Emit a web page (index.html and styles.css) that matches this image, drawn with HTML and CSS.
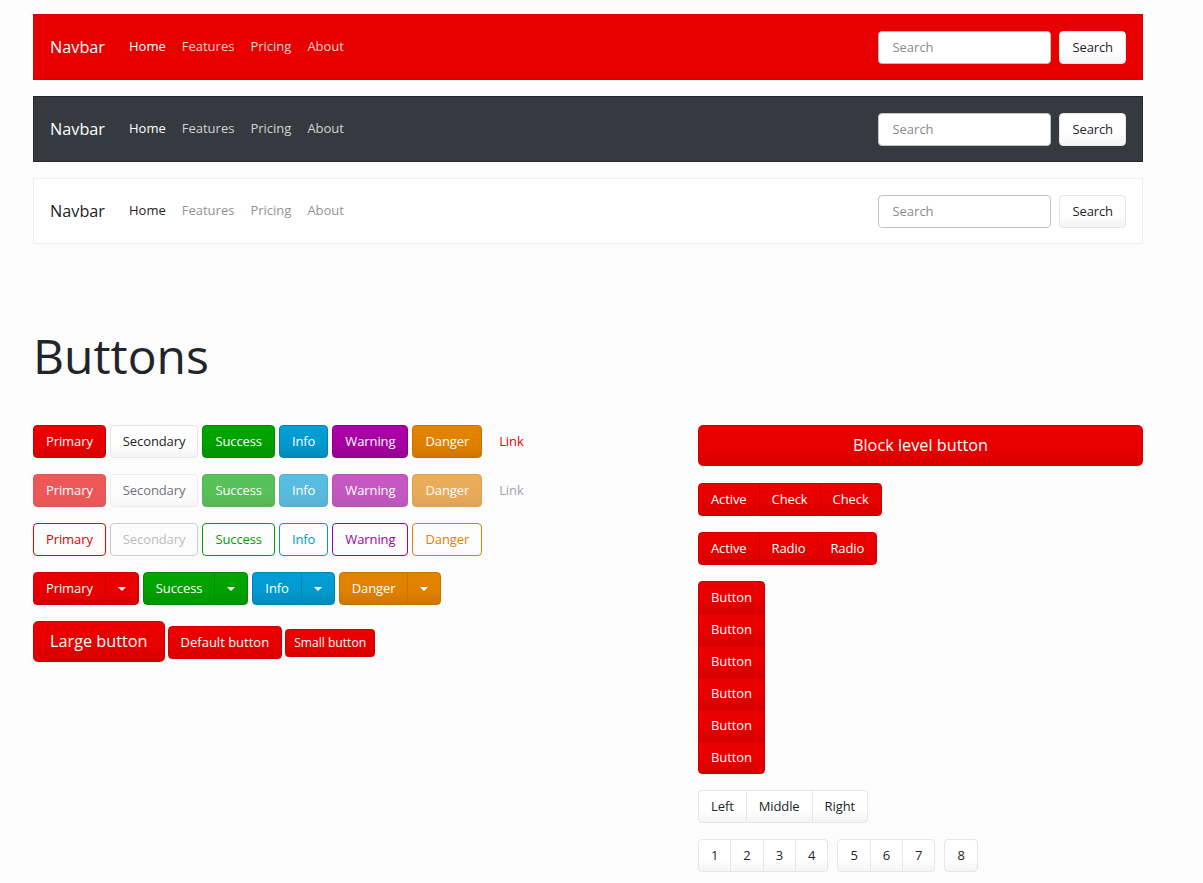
FILE: index.html
```html
<!DOCTYPE html>
<html lang="en">
<head>
<meta charset="utf-8">
<title>Buttons</title>
<link rel="stylesheet" href="styles.css">
</head>
<body>
<div class="container">
  <div class="navs">
    <nav class="navbar navbar-red">
      <span class="brand">Navbar</span>
      <ul class="nav">
        <li class="active">Home</li>
        <li>Features</li>
        <li>Pricing</li>
        <li>About</li>
      </ul>
      <form class="nav-form">
        <input class="form-control" type="text" placeholder="Search">
        <button type="button" class="btn btn-secondary nav-btn">Search</button>
      </form>
    </nav>
    <nav class="navbar navbar-dark">
      <span class="brand">Navbar</span>
      <ul class="nav">
        <li class="active">Home</li>
        <li>Features</li>
        <li>Pricing</li>
        <li>About</li>
      </ul>
      <form class="nav-form">
        <input class="form-control" type="text" placeholder="Search">
        <button type="button" class="btn btn-secondary nav-btn">Search</button>
      </form>
    </nav>
    <nav class="navbar navbar-light">
      <span class="brand">Navbar</span>
      <ul class="nav">
        <li class="active">Home</li>
        <li>Features</li>
        <li>Pricing</li>
        <li>About</li>
      </ul>
      <form class="nav-form">
        <input class="form-control" type="text" placeholder="Search">
        <button type="button" class="btn btn-secondary nav-btn">Search</button>
      </form>
    </nav>
  </div>

  <h1 class="page-title">Buttons</h1>

  <div class="grid">
    <div class="col col-left">
      <div class="btn-row">
        <button class="btn btn-primary">Primary</button>
        <button class="btn btn-secondary">Secondary</button>
        <button class="btn btn-success">Success</button>
        <button class="btn btn-info">Info</button>
        <button class="btn btn-warning">Warning</button>
        <button class="btn btn-danger">Danger</button>
        <button class="btn btn-link">Link</button>
      </div>
      <div class="btn-row disabled">
        <button class="btn btn-primary">Primary</button>
        <button class="btn btn-secondary">Secondary</button>
        <button class="btn btn-success">Success</button>
        <button class="btn btn-info">Info</button>
        <button class="btn btn-warning">Warning</button>
        <button class="btn btn-danger">Danger</button>
        <button class="btn btn-link btn-link-muted">Link</button>
      </div>
      <div class="btn-row">
        <button class="btn btn-outline-primary">Primary</button>
        <button class="btn btn-outline-secondary">Secondary</button>
        <button class="btn btn-outline-success">Success</button>
        <button class="btn btn-outline-info">Info</button>
        <button class="btn btn-outline-warning">Warning</button>
        <button class="btn btn-outline-danger">Danger</button>
      </div>
      <div class="btn-row">
        <div class="btn-group">
          <button class="btn btn-primary">Primary</button>
          <button class="btn btn-primary split"><span class="caret"></span></button>
        </div>
        <div class="btn-group">
          <button class="btn btn-success">Success</button>
          <button class="btn btn-success split"><span class="caret"></span></button>
        </div>
        <div class="btn-group">
          <button class="btn btn-info">Info</button>
          <button class="btn btn-info split"><span class="caret"></span></button>
        </div>
        <div class="btn-group">
          <button class="btn btn-danger">Danger</button>
          <button class="btn btn-danger split"><span class="caret"></span></button>
        </div>
      </div>
      <div class="btn-row sizes">
        <button class="btn btn-primary btn-lg">Large button</button>
        <button class="btn btn-primary">Default button</button>
        <button class="btn btn-primary btn-sm">Small button</button>
      </div>
    </div>

    <div class="col col-right">
      <button class="btn btn-primary btn-lg btn-block">Block level button</button>
      <div class="btn-group">
        <button class="btn btn-primary">Active</button>
        <button class="btn btn-primary">Check</button>
        <button class="btn btn-primary">Check</button>
      </div>
      <div class="btn-group">
        <button class="btn btn-primary">Active</button>
        <button class="btn btn-primary">Radio</button>
        <button class="btn btn-primary">Radio</button>
      </div>
      <div class="btn-group-vertical">
        <button class="btn btn-primary">Button</button>
        <button class="btn btn-primary">Button</button>
        <button class="btn btn-primary">Button</button>
        <button class="btn btn-primary">Button</button>
        <button class="btn btn-primary">Button</button>
        <button class="btn btn-primary">Button</button>
      </div>
      <div class="btn-group">
        <button class="btn btn-secondary">Left</button>
        <button class="btn btn-secondary">Middle</button>
        <button class="btn btn-secondary">Right</button>
      </div>
      <div class="btn-toolbar">
        <div class="btn-group">
          <button class="btn btn-secondary">1</button>
          <button class="btn btn-secondary">2</button>
          <button class="btn btn-secondary">3</button>
          <button class="btn btn-secondary">4</button>
        </div>
        <div class="btn-group">
          <button class="btn btn-secondary">5</button>
          <button class="btn btn-secondary">6</button>
          <button class="btn btn-secondary">7</button>
        </div>
        <div class="btn-group">
          <button class="btn btn-secondary">8</button>
        </div>
      </div>
    </div>
  </div>
</div>
</body>
</html>
```

FILE: styles.css
```css
* {
  box-sizing: border-box;
}

html {
  background: #fcfcfc;
}

body {
  margin: 0;
  padding: 14px 0 0 33px;
  background: #fcfcfc;
  color: #212529;
  font-family: "Open Sans", "Liberation Sans", sans-serif;
  font-size: 13px;
  line-height: 1.5;
}

.container {
  width: 1110px;
}

/* ---------- Navbars ---------- */
.navs {
  display: flex;
  flex-direction: column;
  gap: 16px;
}

.navbar {
  display: flex;
  align-items: center;
  height: 66px;
  padding: 0 16px;
  border: 1px solid;
}

.brand {
  font-size: 16.25px;
  margin-right: 16px;
}

.nav {
  display: flex;
  list-style: none;
  margin: 0;
  padding: 0;
}

.nav li {
  padding: 0 8px;
}

.nav-form {
  margin-left: auto;
  display: flex;
  align-items: center;
  gap: 8px;
}

.form-control {
  width: 173px;
  height: 33px;
  padding: 6px 13px;
  border: 1px solid #c4c4c4;
  border-radius: 4px;
  background: #fff;
  font-family: inherit;
  font-size: 13px;
  color: #495057;
}

.form-control::placeholder {
  color: #8a8a8a;
}

.nav-btn {
  margin-top: -1px;
  padding-left: 12.5px;
  padding-right: 12.5px;
}

.navbar-red {
  background: #e80000;
  border-color: #d60000;
}

.navbar-red .brand,
.navbar-red .nav li.active {
  color: #fff;
}

.navbar-red .nav li {
  color: rgba(255, 255, 255, 0.82);
}

.navbar-red .form-control {
  border-color: #bdbdbd;
}

.navbar-dark {
  background: #343a40;
  border-color: #25292d;
}

.navbar-dark .brand,
.navbar-dark .nav li.active {
  color: #fff;
}

.navbar-dark .nav li {
  color: rgba(255, 255, 255, 0.78);
}

.navbar-light {
  background: #fff;
  border-color: #eeeeee;
}

.navbar-light .brand,
.navbar-light .nav li.active {
  color: #222;
}

.navbar-light .nav li {
  color: #939393;
}

/* ---------- Heading ---------- */
.page-title {
  margin: 84px 0 42px;
  font-size: 48px;
  font-weight: 400;
  line-height: 55px;
  color: #212529;
}

/* ---------- Layout ---------- */
.grid {
  display: grid;
  grid-template-columns: 635px 445px;
  column-gap: 30px;
}

.col {
  display: flex;
  flex-direction: column;
  gap: 16px;
  align-items: flex-start;
}

.btn-row {
  display: flex;
  gap: 4px;
  align-items: center;
}

.btn-row.sizes {
  gap: 3px;
  align-items: baseline;
}

.btn-row.sizes .btn {
  letter-spacing: 0;
}

.btn-row.disabled .btn {
  opacity: 0.65;
}

/* ---------- Buttons ---------- */
.btn {
  display: inline-block;
  margin: 0;
  padding: 6px 12px;
  border: 1px solid transparent;
  border-radius: 4px;
  font-family: inherit;
  font-size: 13px;
  line-height: 19px;
  font-weight: 400;
  letter-spacing: -0.1px;
  text-align: center;
  white-space: nowrap;
  cursor: pointer;
  background: transparent;
}

.btn-lg {
  padding: 8px 16px;
  font-size: 16.25px;
  line-height: 23px;
  border-radius: 4.8px;
  letter-spacing: 0;
}

.btn-sm {
  padding: 4px 8px;
  font-size: 12.1px;
  line-height: 18px;
  border-radius: 3.2px;
}

.btn-block {
  width: 100%;
  margin-bottom: 1px;
}

.btn-primary {
  color: #fff;
  background: linear-gradient(#eb0000, #e60000 60%, #d80000);
  border-color: #cc0000;
}

.btn-secondary {
  color: #212529;
  background: linear-gradient(#ffffff, #ffffff 60%, #f4f4f4);
  border-color: #e6e6e6;
}

.btn-success {
  color: #fff;
  background: linear-gradient(#00a600, #00a000 60%, #009200);
  border-color: #008a00;
}

.btn-info {
  color: #fff;
  background: linear-gradient(#029fd6, #0299cd 60%, #028bbb);
  border-color: #0283b0;
}

.btn-warning {
  color: #fff;
  background: linear-gradient(#ad00a8, #a600a1 60%, #970093);
  border-color: #8c0088;
}

.btn-danger {
  color: #fff;
  background: linear-gradient(#e38400, #de8000 60%, #d07600);
  border-color: #c67100;
}

.btn-link {
  color: #e60000;
  border-color: transparent;
}

.btn-link-muted {
  color: #6c757d;
}

.btn-outline-primary {
  color: #e60000;
  border-color: #e60000;
}

.btn-outline-secondary {
  color: #bcbcbc;
  border-color: #cccccc;
}

.btn-outline-success {
  color: #00a000;
  border-color: #00a000;
}

.btn-outline-info {
  color: #0299cd;
  border-color: #0299cd;
}

.btn-outline-warning {
  color: #a600a1;
  border-color: #a600a1;
}

.btn-outline-danger {
  color: #de8000;
  border-color: #de8000;
}

/* ---------- Groups ---------- */
.btn-group {
  display: inline-flex;
}

.btn-group > .btn + .btn {
  margin-left: -1px;
}

.btn-group > .btn:not(:last-child) {
  border-top-right-radius: 0;
  border-bottom-right-radius: 0;
}

.btn-group > .btn:not(:first-child) {
  border-top-left-radius: 0;
  border-bottom-left-radius: 0;
}

.split {
  padding-left: 12px;
  padding-right: 12px;
}

.caret {
  display: inline-block;
  width: 0;
  height: 0;
  vertical-align: 2px;
  border-top: 4px solid #fff;
  border-left: 4px solid transparent;
  border-right: 4px solid transparent;
}

.btn-group-vertical {
  display: inline-flex;
  flex-direction: column;
}

.btn-group-vertical > .btn + .btn {
  margin-top: -1px;
}

.btn-group-vertical > .btn:not(:last-child) {
  border-bottom-left-radius: 0;
  border-bottom-right-radius: 0;
}

.btn-group-vertical > .btn:not(:first-child) {
  border-top-left-radius: 0;
  border-top-right-radius: 0;
}

.btn-toolbar {
  display: flex;
  gap: 9px;
}
```
